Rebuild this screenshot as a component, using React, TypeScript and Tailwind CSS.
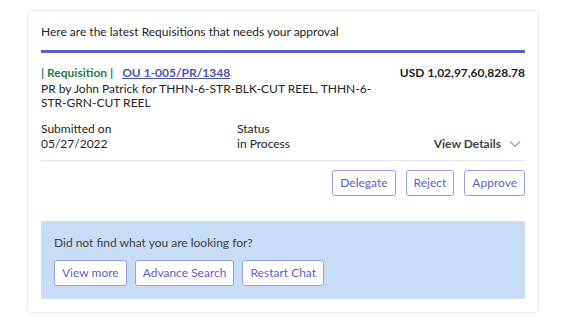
import React from "react";

const Btn = ({ children }: { children: React.ReactNode }) => (
  <button className="h-[26px] px-[7px] rounded-[3px] border border-[#9a9cf0] bg-white text-[12px] text-[#5b5fc7] leading-none">
    {children}
  </button>
);

export default function App() {
  return (
    <div className="w-[563px] h-[327px] bg-white pt-[10px] pl-[27px]" style={{ fontFamily: 'Lato, sans-serif' }}>
      <div className="w-[512px] h-[303px] border border-[#ebebeb] rounded-[4px] px-[13px] pt-[13px] text-[#242424]">
        <div className="text-[12px] leading-[16px]">Here are the latest Requisitions that needs your approval</div>
        <div className="mt-[10px] h-[3px] bg-[#5b5fc7]" />
        <div className="mt-[12px] flex justify-between">
          <div className="w-[336px]">
            <div className="text-[12px] leading-[16px] font-bold">
              <span className="text-[#237b4b]">| Requisition |</span>
              <span className="ml-[9px] text-[#4f52b2] underline">OU 1-005/PR/1348</span>
            </div>
            <div className="text-[12px] leading-[14px] mt-[1px]">
              PR by John Patrick for THHN-6-STR-BLK-CUT REEL, THHN-6-STR-GRN-CUT REEL
            </div>
          </div>
          <div className="text-[12px] leading-[16px] font-bold">USD 1,02,97,60,828.78</div>
        </div>
        <div className="mt-[11px] flex items-end text-[12px] leading-[15px]">
          <div className="w-[196px]">
            <div>Submitted on</div>
            <div>05/27/2022</div>
          </div>
          <div className="flex-1">
            <div>Status</div>
            <div>in Process</div>
          </div>
          <div className="flex items-center gap-[8px] font-bold text-[#424242]">
            <span>View Details</span>
            <svg width="12" height="8" viewBox="0 0 12 8" className="mr-[4px]">
              <path d="M1 1.5 L6 6.5 L11 1.5" fill="none" stroke="#9e9e9e" strokeWidth="1.2" />
            </svg>
          </div>
        </div>
        <div className="mt-[9px] h-px bg-[#e6e6e6]" />
        <div className="mt-[9px] flex justify-end gap-[10px]">
          <Btn>Delegate</Btn>
          <Btn>Reject</Btn>
          <Btn>Approve</Btn>
        </div>
        <div className="mt-[25px] h-[78px] bg-[#c7dcf5] px-[13px] pt-[14px]">
          <div className="text-[12px] leading-[16px] text-[#424242]">Did not find what you are looking for?</div>
          <div className="mt-[9px] flex gap-[8px]">
            <Btn>View more</Btn>
            <Btn>Advance Search</Btn>
            <Btn>Restart Chat</Btn>
          </div>
        </div>
      </div>
    </div>
  );
}
